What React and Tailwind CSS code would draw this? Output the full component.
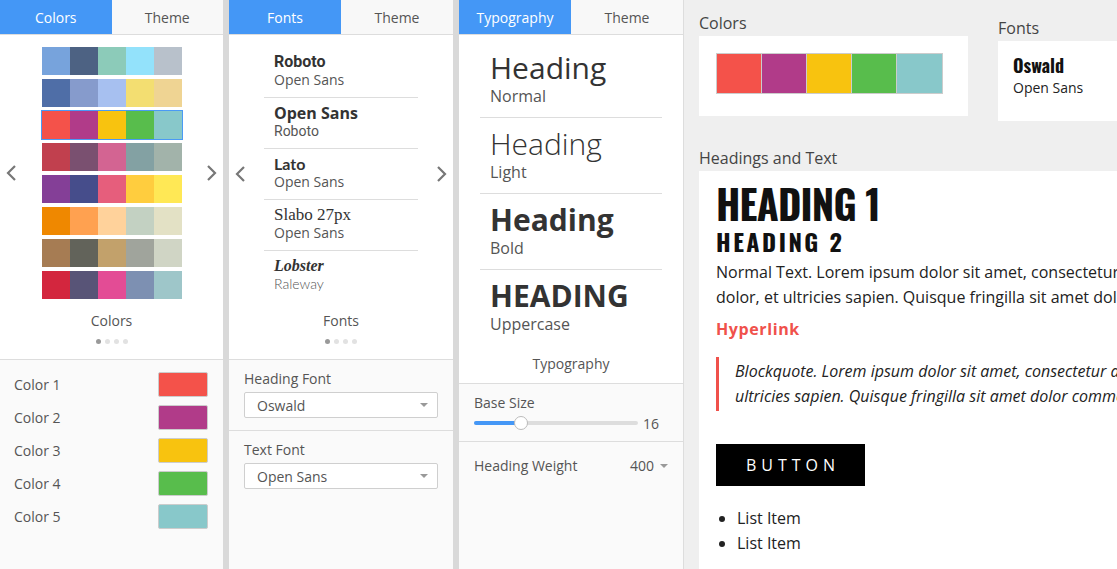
import React from 'react'

const palettes = [
    ['#77a3dc', '#4d6283', '#8ccbb9', '#93e2fb', '#b8c1cb'],
    ['#4f6ea7', '#869bcc', '#a7c0f0', '#f3de71', '#efd493'],
    ['#f4524a', '#b13b89', '#f8c30f', '#58bd4c', '#88c8ca'],
    ['#c1404e', '#7a5070', '#d36492', '#83a1a3', '#a2b3aa'],
    ['#843f97', '#464d8b', '#e65e7c', '#ffcd3e', '#ffe855'],
    ['#ef8800', '#ffa150', '#ffd29b', '#c3d1c2', '#e3e1c5'],
    ['#a67c53', '#62635a', '#c2a16b', '#a0a49c', '#d0d5c5'],
    ['#d3263e', '#585477', '#e34c95', '#7d90b2', '#9ec6c9'],
];

const current = palettes[2];

const fontPairs = [
    {title: 'Roboto', titleFont: "font-['Roboto',sans-serif] font-bold", sub: 'Open Sans', subFont: ''},
    {title: 'Open Sans', titleFont: 'font-bold', sub: 'Roboto', subFont: "font-['Roboto',sans-serif]"},
    {title: 'Lato', titleFont: "font-['Lato',sans-serif] font-bold", sub: 'Open Sans', subFont: ''},
    {title: 'Slabo 27px', titleFont: "font-['Liberation_Serif',serif] text-[17px]", sub: 'Open Sans', subFont: ''},
    {title: 'Lobster', titleFont: "font-['Liberation_Serif',serif] font-bold italic", sub: 'Raleway', subFont: "font-['Lato',sans-serif] font-light"},
];

const typeItems = [
    {label: 'Normal', text: 'Heading', cls: 'font-normal'},
    {label: 'Light', text: 'Heading', cls: 'font-light'},
    {label: 'Bold', text: 'Heading', cls: 'font-bold'},
    {label: 'Uppercase', text: 'HEADING', cls: 'font-bold'},
];

function Chevron({dir}) {
    return (
        <svg width="12" height="18" viewBox="0 0 12 18" fill="none">
            {dir === 'left'
                ? <polyline points="10,2 3,9 10,16" stroke="#777" strokeWidth="2.2"/>
                : <polyline points="2,2 9,9 2,16" stroke="#777" strokeWidth="2.2"/>}
        </svg>
    )
}

function Tabs({active}) {
    return (
        <div className="flex h-[35px] border-b border-[#dddddd] text-[14px]">
            <div className="w-1/2 bg-[#4497f6] text-white flex items-center justify-center">{active}</div>
            <div className="w-1/2 bg-[#f8f8f8] text-[#555] flex items-center justify-center">Theme</div>
        </div>
    )
}

function Dots() {
    return (
        <div className="flex justify-center gap-[4px] mt-[8px]">
            <span className="w-[5px] h-[5px] rounded-full bg-[#999]"/>
            <span className="w-[5px] h-[5px] rounded-full bg-[#e2e2e2]"/>
            <span className="w-[5px] h-[5px] rounded-full bg-[#e2e2e2]"/>
            <span className="w-[5px] h-[5px] rounded-full bg-[#e2e2e2]"/>
        </div>
    )
}

function Select({value}) {
    return (
        <div className="h-[26px] bg-white border border-[#cfcfcf] rounded-[2px] flex items-center justify-between pl-[12px] pr-[9px] text-[14px] text-[#555]">
            <span>{value}</span>
            <span className="w-0 h-0 border-l-[4px] border-r-[4px] border-t-[4px] border-l-transparent border-r-transparent border-t-[#999]"/>
        </div>
    )
}

function ColorsPanel() {
    return (
        <div className="w-[223px] shrink-0 flex flex-col bg-white">
            <Tabs active="Colors"/>
            <div className="h-[324px] pt-[12px]">
                <div className="flex items-center justify-between px-[5px]">
                    <Chevron dir="left"/>
                    <div className="flex flex-col gap-[4px]">
                        {palettes.map((row, i) => (
                            <div key={i} className={'flex ' + (i === 2 ? 'ring-1 ring-[#4a9af5]' : '')}>
                                {row.map((c) => (
                                    <div key={c} className="w-[28px] h-[28px]" style={{backgroundColor: c}}/>
                                ))}
                            </div>
                        ))}
                    </div>
                    <Chevron dir="right"/>
                </div>
                <div className="text-center text-[14px] leading-[20px] text-[#555] mt-[12px]">Colors</div>
                <Dots/>
            </div>
            <div className="flex-1 bg-[#fafafa] border-t border-[#dddddd] pt-[12px] pl-[14px] pr-[15px] flex flex-col gap-[8px]">
                {current.map((c, i) => (
                    <div key={c} className="flex items-center justify-between">
                        <span className="text-[14px] text-[#555]">Color {i + 1}</span>
                        <span className="w-[50px] h-[25px] rounded-[2px] border border-[#cccccc]" style={{backgroundColor: c}}/>
                    </div>
                ))}
            </div>
        </div>
    )
}

function FontsPanel() {
    return (
        <div className="w-[224px] shrink-0 flex flex-col bg-white">
            <Tabs active="Fonts"/>
            <div className="h-[324px] pt-[12px]">
                <div className="flex items-center justify-between px-[5px]">
                    <Chevron dir="left"/>
                    <div className="w-[154px]">
                        {fontPairs.map((f, i) => (
                            <div key={f.title}
                                 className={'pl-[10px] pt-[6px] pb-[8px] ' + (i < fontPairs.length - 1 ? 'border-b border-[#dddddd]' : '')}>
                                <div className={'text-[16px] leading-[18px] text-[#333] ' + f.titleFont}>{f.title}</div>
                                <div className={'text-[14px] leading-[18px] text-[#555] ' + f.subFont}>{f.sub}</div>
                            </div>
                        ))}
                    </div>
                    <Chevron dir="right"/>
                </div>
                <div className="text-center text-[14px] leading-[20px] text-[#555] mt-[10px]">Fonts</div>
                <Dots/>
            </div>
            <div className="flex-1 bg-[#fafafa] border-t border-[#dddddd]">
                <div className="px-[15px] pt-[9px] pb-[12px] border-b border-[#dddddd]">
                    <div className="text-[14px] leading-[20px] text-[#555] mb-[3px]">Heading Font</div>
                    <Select value="Oswald"/>
                </div>
                <div className="px-[15px] pt-[9px]">
                    <div className="text-[14px] leading-[20px] text-[#555] mb-[3px]">Text Font</div>
                    <Select value="Open Sans"/>
                </div>
            </div>
        </div>
    )
}

function TypographyPanel() {
    return (
        <div className="w-[225px] shrink-0 flex flex-col bg-white border-r border-[#dddddd]">
            <Tabs active="Typography"/>
            <div className="pt-[4px] pb-[9px]">
                <div className="ml-[21px] w-[182px]">
                    {typeItems.map((t, i) => (
                        <div key={t.label}
                             className={'pl-[10px] pb-[11px] ' + (i === 0 ? 'pt-[11px] ' : 'pt-[8px] ') + (i < typeItems.length - 1 ? 'border-b border-[#dddddd]' : '')}>
                            <div className={'text-[30px] leading-[36px] text-[#333] ' + t.cls}>{t.text}</div>
                            <div className="text-[16px] leading-[20px] text-[#555]">{t.label}</div>
                        </div>
                    ))}
                </div>
                <div className="text-center text-[14px] leading-[20px] text-[#555] mt-[9px]">Typography</div>
            </div>
            <div className="flex-1 bg-[#fafafa] border-t border-[#dddddd]">
                <div className="px-[15px] pt-[9px] pb-[8px] border-b border-[#dddddd]">
                    <div className="text-[14px] leading-[20px] text-[#555]">Base Size</div>
                    <div className="flex items-center gap-[5px] h-[20px]">
                        <div className="relative w-[164px] h-[4px] rounded-full bg-[#dddddd]">
                            <div className="absolute left-0 top-0 h-[4px] w-[47px] rounded-full bg-[#4497f6]"/>
                            <div className="absolute left-[40px] top-[-5px] w-[14px] h-[14px] rounded-full bg-white border border-[#bbbbbb]"/>
                        </div>
                        <span className="text-[14px] text-[#555]">16</span>
                    </div>
                </div>
                <div className="px-[15px] pt-[14px] flex items-center justify-between text-[14px] leading-[20px] text-[#555]">
                    <span>Heading Weight</span>
                    <span className="flex items-center gap-[6px]">400
                        <span className="w-0 h-0 border-l-[4px] border-r-[4px] border-t-[4px] border-l-transparent border-r-transparent border-t-[#999]"/>
                    </span>
                </div>
            </div>
        </div>
    )
}

const oswald = "font-['Oswald','Liberation_Sans_Narrow','DejaVu_Sans_Condensed',sans-serif]";

function Preview() {
    return (
        <div className="flex-1 min-w-0 overflow-hidden bg-[#efefef] pl-[15px] pt-[12px] flex flex-col">
            <div className="flex gap-[30px]">
                <div>
                    <div className="text-[16px] leading-[22px] text-[#444] mb-[2px]">Colors</div>
                    <div className="w-[269px] h-[80px] bg-white p-[17px]">
                        <div className="flex border border-[#cccccc] w-fit">
                            {current.map((c, i) => (
                                <div key={c}
                                     className={'w-[45px] h-[39px] ' + (i < 4 ? 'border-r border-[#cccccc]' : '')}
                                     style={{backgroundColor: c}}/>
                            ))}
                        </div>
                    </div>
                </div>
                <div className="mt-[5px] shrink-0">
                    <div className="text-[16px] leading-[22px] text-[#444] mb-[2px]">Fonts</div>
                    <div className="w-[270px] h-[80px] bg-white px-[15px] pt-[12px]">
                        <div className={'text-[18px] leading-[24px] font-bold text-[#111] ' + oswald}>Oswald</div>
                        <div className="text-[14px] leading-[22px] text-[#222]">Open Sans</div>
                    </div>
                </div>
            </div>
            <div className="text-[16px] leading-[22px] text-[#444] mt-[26px] mb-[2px]">Headings and Text</div>
            <div className="w-[800px] flex-1 bg-white pl-[17px] pt-[10px] text-[#222]">
                <div className={'text-[40px] leading-[44px] font-bold text-[#111] tracking-[-0.8px] ' + oswald}>HEADING 1</div>
                <div className={'text-[24px] leading-[32px] font-bold text-[#111] tracking-[2.5px] ' + oswald}>HEADING 2</div>
                <div className="mt-[3px] text-[16px] leading-[25px] whitespace-nowrap">
                    <div>Normal Text. Lorem ipsum dolor sit amet, consectetur adipiscing elit. Morbi et neque vitae</div>
                    <div>dolor, et ultricies sapien. Quisque fringilla sit amet dolor commodo efficitur.</div>
                </div>
                <div className="mt-[7px] text-[16px] leading-[25px] font-bold text-[#f0514b] tracking-[0.6px]">Hyperlink</div>
                <div className="mt-[15px] border-l-[3px] border-[#f0514b] pl-[16px] py-[2px] text-[16px] leading-[25px] italic whitespace-nowrap">
                    <div>Blockquote. Lorem ipsum dolor sit amet, consectetur adipiscing elit. Morbi et neque vitae</div>
                    <div>ultricies sapien. Quisque fringilla sit amet dolor commodo efficitur.</div>
                </div>
                <div className="mt-[33px] w-[149px] h-[42px] bg-black text-white flex items-center justify-center text-[16px] tracking-[5px] pl-[5px]">
                    BUTTON
                </div>
                <ul className="mt-[20px] list-disc pl-[21px] text-[16px] leading-[25px]">
                    <li>List Item</li>
                    <li>List Item</li>
                </ul>
            </div>
        </div>
    )
}

export default function App() {
    return (
        <div className="w-[1117px] h-[569px] overflow-hidden flex font-['Open_Sans',sans-serif]">
            <div className="flex gap-[6px] bg-[#d9d9d9]">
                <ColorsPanel/>
                <FontsPanel/>
                <TypographyPanel/>
            </div>
            <Preview/>
        </div>
    )
}
